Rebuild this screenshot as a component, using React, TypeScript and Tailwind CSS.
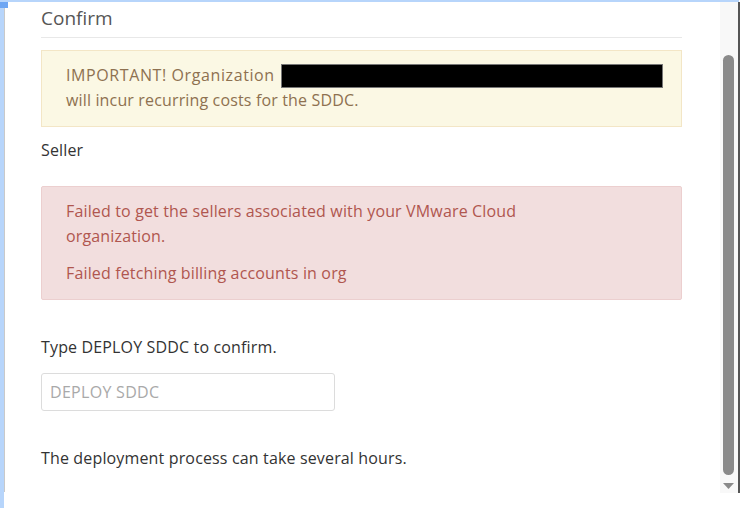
export default function App() {
  const font = { fontFamily: '"Open Sans", "Liberation Sans", sans-serif' };
  return (
    <div className="w-[741px] h-[508px] bg-white overflow-hidden flex flex-col" style={font}>
      <div className="h-[2px] bg-[#b7d5fb] w-[739px] shrink-0" />
      <div className="flex flex-1 min-h-0">
        {/* left rail */}
        <div className="w-[5px] flex flex-col shrink-0">
          <div className="h-[6px] w-[8px] bg-[#6ea6f3]" />
          <div className="flex flex-1">
            <div className="w-[4px] bg-[#b7d5fb]" />
            <div className="w-[1px] h-[484px] bg-[#c9c9c9]" />
          </div>
        </div>

        {/* dialog body */}
        <div className="flex-1 pl-[36px] pr-[38px] text-[16px] leading-[25px] tracking-[0.15px]">
          <h3 className="text-[19px] leading-[24px] text-[#565656] pt-[4px] pb-[7px] border-b border-[#e8e8e8] tracking-normal">
            Confirm
          </h3>

          <div className="mt-[12px] border border-[#f3e6c6] bg-[#fbf8e4] pl-6 pr-[18px] pt-[12px] pb-[13px] text-[#8e7150]">
            <div className="flex items-center">
              <span className="tracking-[0.6px]">IMPORTANT! Organization</span>
              <span className="ml-[6px] mt-[1px] flex-1 h-[24px] bg-black border border-[#777]" />
            </div>
            <div>will incur recurring costs for the SDDC.</div>
          </div>

          <div className="mt-[11px] text-[#333]">Seller</div>

          <div className="mt-[23px] border border-[#eccfcf] bg-[#f2dede] rounded-[2px] pl-6 pr-4 pt-[12px] pb-[13px] text-[#b0564f]">
            <p>
              Failed to get the sellers associated with your VMware Cloud
              <br />
              organization.
            </p>
            <p className="mt-[12px]">Failed fetching billing accounts in org</p>
          </div>

          <div className="mt-[35px] text-[#333]">Type DEPLOY SDDC to confirm.</div>

          <input
            className="mt-[13px] block w-[294px] h-[38px] border border-[#dcdcdc] rounded-[3px] px-[8px] text-[16px] tracking-[0.3px] text-[#333] placeholder:text-[#a9a9a9] outline-none"
            placeholder="DEPLOY SDDC"
            style={font}
          />

          <div className="mt-[35px] text-[#333]">The deployment process can take several hours.</div>
        </div>

        {/* scrollbar */}
        <div className="w-[18px] h-[491px] bg-[#f8f8f8] relative shrink-0">
          <div className="absolute left-[3px] top-[53px] w-[11px] h-[420px] rounded-full bg-[#8a8a8a]" />
          <svg className="absolute left-[3px] top-[481px]" width="11" height="7" viewBox="0 0 11 7">
            <polygon points="0,0 11,0 5.5,6" fill="#8a8a8a" />
          </svg>
        </div>
        <div className="w-[2px] h-[491px] bg-[#555] shrink-0" />
        <div className="w-[1px] shrink-0" />
      </div>
    </div>
  );
}
